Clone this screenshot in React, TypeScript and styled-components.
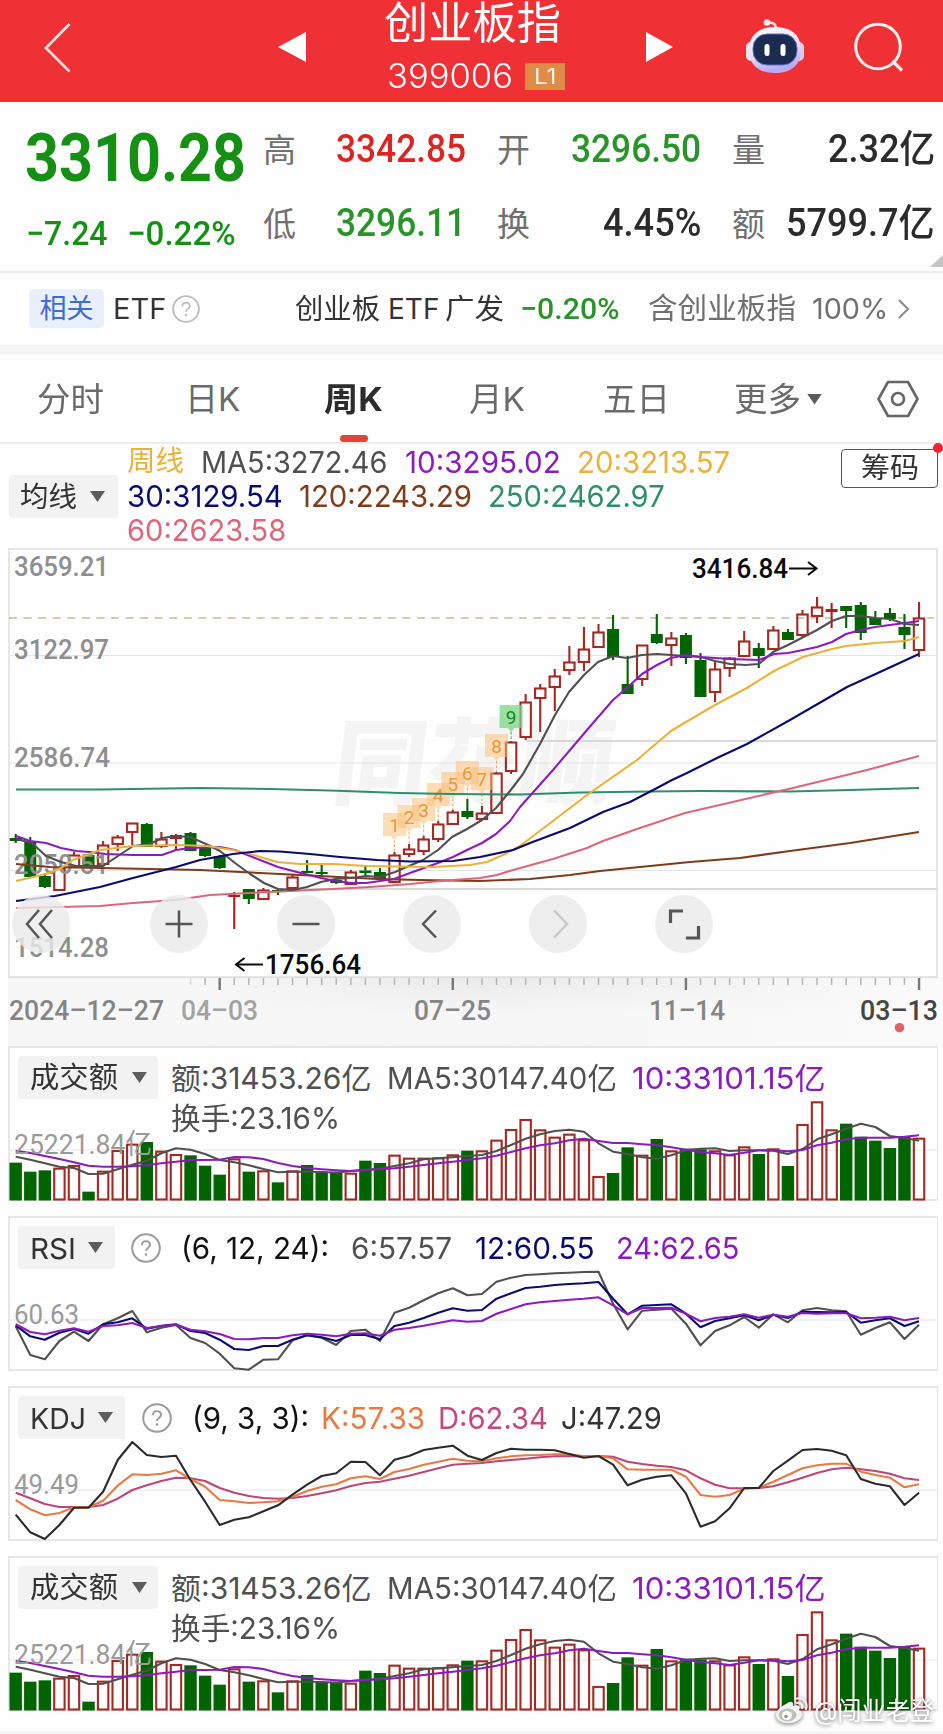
import React, { useLayoutEffect, useRef, useState } from "react";
import styled, { createGlobalStyle } from "styled-components";

const SANS = '"Inter", "Noto Sans CJK SC", sans-serif';
const DIN = '"Roboto", "Noto Sans CJK SC", sans-serif';

const C = {
  red: "#ef3135",
  up: "#a32a24",
  down: "#006400",
  green: "#159015",
  grey: "#505050",
  purple: "#8a1cbe",
  gold: "#e9b23c",
  navy: "#0b0b6e",
  brown: "#7d3c1c",
  teal: "#2f8f6b",
  pink: "#d8687c",
  line: "#e6e6e6",
};

const GlobalStyle = createGlobalStyle`
  * { box-sizing: border-box; }
  body { margin: 0; background: #fefefe; font-family: ${SANS}; }
`;

/* ---------- text that is condensed to a given advance width ---------- */

const FitBox = styled.span<{ $w: number; $ml: number; $dy: number }>`
  display: block;
  flex: none;
  width: ${(p) => p.$w}px;
  margin-left: ${(p) => p.$ml}px;
  margin-top: ${(p) => p.$dy}px;
`;

const FitText = styled.span<{ $size: number; $weight: number; $color: string; $din: boolean }>`
  display: inline-block;
  vertical-align: top;
  white-space: pre;
  transform-origin: 0 50%;
  line-height: 1;
  font-family: ${(p) => (p.$din ? DIN : SANS)};
  font-size: ${(p) => p.$size}px;
  font-weight: ${(p) => p.$weight};
  color: ${(p) => p.$color};
`;

type FitProps = {
  w: number;
  size: number;
  ml?: number;
  dy?: number;
  weight?: number;
  color?: string;
  din?: boolean;
  children: string;
};

function Fit({ w, size, ml = 0, dy = 0, weight = 400, color = C.grey, din = false, children }: FitProps) {
  const ref = useRef<HTMLSpanElement>(null);
  const [scale, setScale] = useState(1);
  useLayoutEffect(() => {
    if (ref.current) setScale(w / ref.current.offsetWidth);
  }, [w, children]);
  return (
    <FitBox $w={w} $ml={ml} $dy={dy}>
      <FitText ref={ref} $size={size} $weight={weight} $color={color} $din={din} style={{ transform: `scaleX(${scale})` }}>
        {children}
      </FitText>
    </FitBox>
  );
}

/* ---------- page parts ---------- */

const Page = styled.main`
  position: relative;
  width: 943px;
  height: 1734px;
  overflow: hidden;
  display: flex;
  flex-direction: column;
`;

const Header = styled.header`
  height: 102px;
  flex: none;
  background: ${C.red};
  display: flex;
  align-items: center;
  svg { flex: none; display: block; }
`;

const TitleBlock = styled.div`
  width: 339px;
  height: 102px;
  padding: 1px 0 0 78px;
  display: flex;
  flex-direction: column;
`;

const CodeRow = styled.div`
  display: flex;
  align-items: center;
  height: 28px;
  margin-top: 17px;
`;

const LevelBadge = styled.span`
  width: 40px;
  height: 27px;
  margin-left: 12px;
  background: #e08c48;
  display: flex;
  align-items: center;
  justify-content: center;
`;

const Quote = styled.section`
  position: relative;
  height: 171px;
  flex: none;
  display: flex;
  border-bottom: 2px solid #ececec;
`;

const PriceBlock = styled.div`
  width: 263px;
  padding: 23px 0 0 25px;
`;

const ChangeRow = styled.div`
  display: flex;
  margin-top: 24px;
`;

const StatGrid = styled.div`
  flex: 1;
  display: grid;
  grid-template-columns: 34px 169px 67px 168px 64px 178px;
  grid-template-rows: 74px 74px;
  padding-top: 10px;
`;

const StatLabel = styled.div<{ $pad?: number }>`
  display: flex;
  align-items: center;
  padding: 2px 0 0 ${(p) => p.$pad ?? 0}px;
`;

const StatValue = styled.div<{ $right?: number }>`
  display: flex;
  align-items: center;
  justify-content: flex-end;
  padding-right: ${(p) => p.$right ?? 0}px;
`;

const Corner = styled.i`
  position: absolute;
  right: 0;
  bottom: 4px;
  width: 13px;
  height: 12px;
  background: #c6c6c6;
  clip-path: polygon(100% 0, 100% 100%, 0 100%);
`;

const EtfRow = styled.section`
  height: 81px;
  flex: none;
  padding: 0 0 1px 29px;
  border-bottom: 9px solid #f5f5f6;
  display: flex;
  align-items: center;
  svg { flex: none; }
`;

const Chip = styled.span`
  width: 75px;
  height: 39px;
  border-radius: 5px;
  background: #e9effd;
  display: flex;
  align-items: center;
  justify-content: center;
`;

const Tabs = styled.nav`
  height: 90px;
  flex: none;
  display: flex;
  align-items: center;
  padding: 2px 0 0 37px;
  border-bottom: 2px solid #ececec;
`;

const ActiveTab = styled.div`
  height: 100%;
  margin-left: 84px;
  display: flex;
  flex-direction: column;
  align-items: center;
  padding-top: 27px;
  &::after {
    content: "";
    width: 28px;
    height: 8px;
    margin-top: 19px;
    border-radius: 4px;
    background: #e0443e;
  }
`;

const Caret = styled.i<{ $ml: number; $w?: number }>`
  flex: none;
  width: ${(p) => p.$w ?? 15}px;
  height: 11px;
  margin-left: ${(p) => p.$ml}px;
  background: #5c5c5c;
  clip-path: polygon(0 0, 100% 0, 50% 100%);
`;

const Legend = styled.section`
  height: 104px;
  flex: none;
  display: flex;
  padding-left: 9px;
`;

const Picker = styled.div<{ $w: number; $mt?: number }>`
  width: ${(p) => p.$w}px;
  height: 43px;
  flex: none;
  margin-top: ${(p) => p.$mt ?? 0}px;
  padding-left: 12px;
  border-radius: 4px;
  background: #f2f2f2;
  display: flex;
  align-items: center;
`;

const LegendLines = styled.div`
  width: 724px;
  padding-top: 1px;
  flex: none;
`;

const LegendLine = styled.div`
  height: 34px;
  display: flex;
  align-items: center;
  padding-left: 9px;
`;

const ChipsButton = styled.div`
  position: relative;
  width: 97px;
  height: 39px;
  margin: 5px 0 0 -1px;
  border: 1.5px solid #555;
  border-radius: 4px;
  display: flex;
  align-items: center;
  justify-content: center;
  &::after {
    content: "";
    position: absolute;
    right: -6px;
    top: -7px;
    width: 10px;
    height: 10px;
    border-radius: 50%;
    background: #ee2433;
  }
`;

const MainChart = styled.section`
  flex: none;
  width: 930px;
  height: 429px;
  margin-left: 8px;
  display: grid;
  > * { grid-area: 1 / 1; }
  svg { display: block; overflow: visible; }
`;

const Controls = styled.div`
  align-self: end;
  height: 82px;
  padding-left: 4px;
  display: flex;
  gap: 68.3px;
  button:first-child { margin-right: 12px; }
`;

const RoundButton = styled.button<{ $dim?: boolean }>`
  width: 58px;
  height: 58px;
  padding: 0;
  border: 0;
  border-radius: 50%;
  background: rgba(234, 234, 234, 0.82);
  color: ${(p) => (p.$dim ? "#c9c9c9" : "#555")};
`;

const Timeline = styled.section`
  flex: none;
  width: 935px;
  height: 69px;
  margin-left: 8px;
  background: linear-gradient(90deg, #f7f7f7 0 20%, transparent 50%, #fafafa 100%),
    linear-gradient(#e9e9e9, #f6f6f6 55%);
  svg { display: block; }
`;

const Panel = styled.section`
  flex: none;
  width: 930px;
  height: 155px;
  margin: 0 0 15px 8px;
  border: 2px solid ${C.line};
  border-right-width: 1px;
  display: grid;
  > * { grid-area: 1 / 1; }
  > svg { display: block; margin: -2px; }
`;

const PanelHead = styled.div`
  display: flex;
  align-items: flex-start;
  padding: 8px 0 0 8px;
`;

const HeadLines = styled.div`
  display: flex;
  flex-direction: column;
`;

const HeadLine = styled.div<{ $h: number }>`
  display: flex;
  align-items: center;
  height: ${(p) => p.$h}px;
`;

const BottomStrip = styled.div`
  height: 4px;
  margin-top: 5px;
  background: #f4f4f4;
`;

const Watermark = styled.div`
  position: absolute;
  left: 773px;
  top: 1695px;
  display: flex;
  align-items: center;
  filter: drop-shadow(0 1px 2px rgba(0, 0, 0, 0.55));
`;

/* ---------- data ---------- */

const X0 = 15.7;
const STEP = 14.57;
const xAt = (i: number) => X0 + STEP * i;

type Candle = [kind: "r" | "g" | "f", high: number, top: number, bottom: number, low: number];

const candles: Candle[] = [
  ["g", 834, 838, 841, 843], ["g", 837, 841, 877, 877], ["g", 873, 876, 887, 888], ["r", 868, 868, 890, 890],
  ["r", 852, 855, 867, 868], ["g", 855, 855, 867, 867], ["r", 841, 845, 864, 864], ["r", 835, 837, 844, 851],
  ["r", 823, 823, 832, 845], ["g", 823, 824, 847, 847], ["r", 832, 839, 846, 848], ["f", 834, 835, 839, 849],
  ["g", 832, 833, 851, 851], ["g", 847, 848, 856, 857], ["g", 855, 856, 868, 869], ["f", 892, 895, 897, 929],
  ["g", 889, 889, 899, 904], ["r", 888, 890, 899, 900], ["g", 889, 890, 891.5, 895], ["r", 874, 877, 888, 888],
  ["g", 860, 871, 873, 873], ["g", 865, 872, 874, 876], ["g", 879, 880, 883, 884], ["r", 870, 872, 884, 884],
  ["g", 866, 870.5, 873, 876], ["g", 868, 872, 879, 879], ["r", 852, 855, 882, 882], ["r", 844, 849, 854, 857],
  ["r", 836, 839, 851, 855], ["r", 821, 824, 839, 842], ["r", 810, 812, 824, 825], ["g", 799, 811, 817, 819],
  ["r", 806, 813, 819, 820], ["r", 772, 773, 813, 813], ["r", 741, 742, 771, 774], ["r", 694, 702, 737, 740],
  ["r", 684, 688, 698, 732], ["r", 669, 676, 687, 711], ["r", 646, 662, 670, 675], ["r", 627, 649, 662, 671],
  ["r", 624, 632, 647, 647], ["g", 615, 629, 657, 660], ["g", 656, 684, 694, 694], ["r", 645, 645, 679, 686],
  ["g", 614, 634, 643, 644], ["r", 632, 638, 645, 666], ["g", 633, 635, 658, 664], ["g", 653, 660, 697, 697],
  ["r", 661, 669, 692, 702], ["r", 657, 658, 668, 677], ["r", 631, 641, 656, 656], ["g", 643, 648, 656, 668],
  ["r", 626, 630, 649, 649], ["g", 629, 632, 640, 640], ["r", 610, 614, 635, 637], ["r", 597, 607, 616, 623],
  ["f", 603, 609, 612, 628], ["g", 606, 606, 611, 628], ["g", 602, 605, 633, 640], ["g", 611, 618, 625, 625],
  ["g", 608, 613, 619, 621], ["g", 614, 627, 635, 649], ["r", 602, 618, 650, 657],
];

const maLines: { color: string; pts: string }[] = [
  { color: C.teal, pts: "16,789.5 100,789.5 200,788 270,789 330,790.5 400,793 450,794 520,794.5 580,792.5 650,791.5 700,791 790,791.5 850,790 919,788" },
  { color: C.brown, pts: "16,864 50,867 100,868 150,869 200,870 260,873 320,876 377,879 420,880 480,881 530,879 570,875 600,871 640,867 690,862 740,858 790,851 850,843 919,832" },
  { color: C.pink, pts: "16,908 60,907 100,906 133,903 176,900 210,895 250,893 290,891 333,889 370,887 410,884 440,881 480,878 497,875 513,870 553,859 587,848 603,841 637,829 685,813 737,801 793,788 830,779 867,770 919,756" },
  { color: C.grey, pts: "16,839 32,843 46,856 61,862 76,866 103,866 118,856 133,846 150,844 162,838 176,836 190,837 206,844 220,851 235,863 250,874 264,883 278,889 293,890 307,887 321,882 335,879 351,878 366,876 380,877 395,872 409,866 423,860 438,850 452,837 467,829 482,820 496,808 510,791 523,774 540,744 555,715 569,692 584,675 598,662 613,656 627,658 642,655 657,654 686,656 701,657 715,661 730,664 745,665 759,664 773,652 788,645 817,630 832,621 846,616 861,616 876,618 890,619 905,624 919,625" },
  { color: C.purple, pts: "16,836 30,841 46,843 61,848 76,851 90,852 105,854 133,855 162,855 176,850 190,848 220,847 235,850 250,856 278,867 293,871 321,878 336,881 351,883 366,883 380,881 394,879 410,873 438,863 453,857 467,850 482,843 496,834 510,821 520,807 553,770 587,730 613,700 628,687 642,674 657,665 671,658 686,655 701,657 715,658 730,659 759,660 774,654 788,653 803,650 817,647 832,642 846,634 861,630 875,627 890,625 905,623 919,621" },
  { color: C.gold, pts: "16,881 46,874 61,868 73,860 100,850 133,846 177,845 207,846 233,850 250,854 277,862 300,864 333,864 367,866 433,867 470,865 487,862 503,855 520,846 553,821 587,795 637,760 671,731 686,722 715,705 747,688 774,671 803,657 832,649 846,646 875,643 905,641 919,637" },
  { color: C.navy, pts: "16,901 55,896 100,887 133,878 176,867 200,860 233,854 260,851 280,851.5 310,854 340,857 377,860 410,861.5 453,861 480,857 513,850 530,843 570,828 603,812 630,802 657,788 672,780 687,773 717,758 747,744 790,720 847,687 880,672 919,654" },
];

const signals: [number, number, number][] = [
  [1, 26, 825], [2, 27, 817], [3, 28, 810], [4, 29, 795], [5, 30, 784], [6, 31, 773], [7, 32, 779], [8, 33, 746], [9, 34, 717],
];

const volume =
  "g368 g395 g391 r383 r375 g455 r392 r330 r311 g306 r332 r342 g346 g377 g404 r355 g395 r391 g427 r391 g375 g395 g395 r398 g362 g369 r344 r353 r353 r352 r343 g332 r331 r299 r267 r237 r268 r290 r281 r298 r408 g399 g322 r344 g297 r331 g326 g328 r331 r343 r319 g342 r325 g378 r252 r184 r268 g251 g290 g302 g324 g290 r293".split(" ");

const nums = (s: string) => s.split(" ").map(Number);

const volMa5 = nums("350 359 370 380 384 402 401 388 374 362 340 325 329 342 360 367 376 387 397 395 395 396 398 393 389 386 378 370 358 355 352 348 345 333 315 296 283 273 269 275 310 335 342 352 356 346 330 326 325 333 331 331 332 342 327 298 283 266 251 261 288 294 302");
const volMa10 = nums("332 339 348 357 367 377 380 380 379 376 370 365 360 360 359 351 352 357 369 378 384 388 391 393 390 388 385 380 375 370 365 360 355 347 336 325 316 310 301 296 303 309 309 313 316 322 329 336 340 345 338 331 331 334 330 316 308 298 293 293 293 290 286");

const rsi6 = nums("858 944 957 902 874 902 852 834 812 876 862 854 893 908 940 984 988 958 957 900 885 892 914 872 868 902 817 802 780 759 744 765 761 724 712 704 702 699 697 695 694 790 867 811 808 805 850 915 872 855 830 862 822 846 810 803 810 813 883 863 846 896 853");
const rsi12 = nums("855 888 898 877 866 880 852 846 834 865 856 852 872 878 898 926 929 917 917 898 885 891 902 884 884 897 857 847 833 817 804 811 809 775 759 743 739 734 731 729 725 775 822 796 794 792 820 861 842 834 825 840 823 833 814 815 816 815 847 840 834 857 843");
const rsi24 = nums("852 875 882 871 864 874 857 855 848 863 857 853 868 873 881 896 897 893 893 885 880 883 888 880 879 886 868 863 856 848 840 844 842 820 806 792 786 782 778 775 771 795 822 803 803 802 820 843 833 829 822 832 823 829 818 820 819 819 834 832 829 840 833");

const kdjJ = nums("404 457 477 435 383 383 335 240 186 225 231 227 300 365 435 419 412 394 376 344 314 288 280 245 246 286 239 228 210 203 197 227 240 219 206 209 209 211 222 233 228 254 316 299 290 286 340 440 424 385 324 324 273 242 210 207 212 226 297 311 319 375 338");
const kdjK = nums("360 388 406 399 382 382 362 317 283 285 281 271 297 320 360 364 369 367 364 350 333 320 313 295 289 297 276 267 254 245 236 242 244 235 229 226 225 223 223 229 228 235 268 269 269 269 290 345 350 345 326 323 305 285 265 256 251 251 275 285 293 322 313");
const kdjD = nums("338 355 372 381 381 381 375 356 330 316 303 293 295 303 324 338 348 354 356 354 348 340 331 318 309 305 296 287 276 265 254 251 249 244 240 236 232 229 228 229 228 230 245 252 257 261 271 295 314 325 325 324 319 307 293 279 268 263 268 273 281 295 300");

/* values are stored in thirds of a pixel, `base` is the panel's own zero */
const toPoints = (v: number[], base: number) => v.map((y, i) => `${xAt(i).toFixed(1)},${((y - base) / 3).toFixed(1)}`).join(" ");

function Line({ data, base, color }: { data: number[]; base: number; color: string }) {
  return <polyline points={toPoints(data, base)} fill="none" stroke={color} strokeWidth={2.1} strokeLinejoin="round" />;
}

function AxisText({ x, y, w, size = 28, color = "#8f8f8f", weight = 500, children }: {
  x: number; y: number; w: number; size?: number; color?: string; weight?: number; children: string;
}) {
  return (
    <text x={x} y={y} textLength={w} lengthAdjust="spacingAndGlyphs" fontFamily={DIN} fontSize={size} fontWeight={weight} fill={color}>
      {children}
    </text>
  );
}

/* ---------- charts ---------- */

function PriceChart() {
  return (
    <svg width="930" height="429" viewBox="8 548 930 429">
      <rect x="9" y="549" width="928" height="428" fill="none" stroke={C.line} strokeWidth="2" />
      <g transform="translate(330 797) skewX(-7)">
        <text textLength="280" fontFamily="Noto Sans CJK SC" fontWeight="900" fontSize="94" fill="#f4f4f4">同花顺</text>
      </g>
      {[655.5, 763, 870.5].map((y) => (
        <line key={y} x1="9" x2="937" y1={y} y2={y} stroke="#e4e4e4" strokeWidth="1" />
      ))}
      <line x1="526" x2="937" y1="741" y2="741" stroke="#d9d9d9" strokeWidth="2" />
      <line x1="278" x2="937" y1="889" y2="889" stroke="#d9d9d9" strokeWidth="2" />
      <line x1="9" x2="934" y1="618" y2="618" stroke="#c4bd98" strokeWidth="1.4" strokeDasharray="8 6.57" />
      {candles.map(([kind, high, top, bottom, low], i) => {
        const x = xAt(i);
        const color = kind === "g" ? C.down : kind === "f" ? "#b01c1c" : C.up;
        return (
          <g key={i} stroke={color} strokeWidth="2.1">
            {high < top && <line x1={x} x2={x} y1={high} y2={top} />}
            {low > bottom && <line x1={x} x2={x} y1={bottom} y2={low} />}
            {kind === "r" ? (
              <rect x={x - 5.2} y={top + 0.5} width="10.4" height={bottom - top - 0.5} fill="none" />
            ) : (
              <rect x={x - 6} y={top} width="12" height={bottom - top} fill={color} stroke="none" />
            )}
          </g>
        );
      })}
      <AxisText x={14} y={576} w={95}>3659.21</AxisText>
      <AxisText x={14} y={659} w={95}>3122.97</AxisText>
      <AxisText x={14} y={767} w={96}>2586.74</AxisText>
      <AxisText x={14} y={874} w={95}>2050.51</AxisText>
      <AxisText x={14} y={957} w={95}>1514.28</AxisText>
      {signals.map(([n, i, y]) => {
        const x = xAt(i);
        const last = n === 9;
        const tint = last ? "#7dd487" : "#f9bd76";
        return (
          <g key={n}>
            <path d={`M${x - 11.5} ${y - 12}h23v23h-8l-3.5 4l-3.5 -4h-8z`} fill={tint} fillOpacity={last ? 0.75 : 0.52} />
            <line x1={x} x2={x} y1={y + 15} y2={candles[i][1]} stroke={last ? "#4e9a55" : "#e4ad55"} strokeDasharray="2.5 2" />
            <text x={x} y={y + 7} textAnchor="middle" fontFamily={DIN} fontSize="19" fill={last ? "#138a22" : "#e79a34"}>{n}</text>
          </g>
        );
      })}
      {maLines.map((l) => (
        <polyline key={l.color} points={l.pts} fill="none" stroke={l.color} strokeWidth="2.1" strokeLinejoin="round" />
      ))}
      <AxisText x={692} y={578} w={96} color="#0a0a0a">3416.84</AxisText>
      <path d="M789 568.5h27M808 562l8.500 6.500l-8.500 6.500" fill="none" stroke="#0a0a0a" strokeWidth="2" />
      <AxisText x={265} y={974} w={96} color="#0a0a0a">1756.64</AxisText>
      <path d="M263 964.500h-26.500M244.500 958l-8.500 6.500l8.500 6.500" fill="none" stroke="#0a0a0a" strokeWidth="2" />
    </svg>
  );
}

function TimeAxis() {
  return (
    <svg width="935" height="69" viewBox="8 977 935 69">
      <line x1="8" x2="938" y1="977.5" y2="977.5" stroke="#dedede" />
      {Array.from({ length: 51 }, (_, k) => k + 12).map((i) => {
        const major = (i - 14) % 16 === 0;
        return (
          <line key={i} x1={xAt(i)} x2={xAt(i)} y1="978" y2={major ? 990 : 985} stroke={major ? "#777" : "#b5b5b5"} strokeWidth={major ? 2.4 : 1.5} opacity={i < 13 ? 0.5 : 1} />
        );
      })}
      <AxisText x={9} y={1020} w={155} color="#858585">2024–12–27</AxisText>
      <AxisText x={181} y={1020} w={77} color="#a3a3a3">04–03</AxisText>
      <AxisText x={414} y={1020} w={77} color="#858585">07–25</AxisText>
      <AxisText x={649} y={1020} w={76} color="#858585">11–14</AxisText>
      <AxisText x={860} y={1020} w={78} color="#444">03–13</AxisText>
      <circle cx="899.5" cy="1027.7" r="4.8" fill="#da6663" />
    </svg>
  );
}

function VolumePanel() {
  return (
    <Panel>
      <PanelHead>
        <Picker $w={140}>
          <Fit w={88} size={29} color="#333" dy={-1}>成交额</Fit>
          <Caret $ml={14} />
        </Picker>
        <HeadLines>
          <HeadLine $h={43}>
            <Fit w={200} size={30} ml={13} dy={1}>额:31453.26亿</Fit>
            <Fit w={230} size={30} ml={16} dy={1}>MA5:30147.40亿</Fit>
            <Fit w={194} size={30} ml={15} dy={1} color={C.purple}>10:33101.15亿</Fit>
          </HeadLine>
          <HeadLine $h={36}>
            <Fit w={169} size={30} ml={13} dy={1}>换手:23.16%</Fit>
          </HeadLine>
        </HeadLines>
      </PanelHead>
      <svg width="930" height="155" viewBox="8 0 930 155">
        <line x1="9" x2="937" y1="104" y2="104" stroke={C.line} />
        {volume.map((v, i) => {
          const top = (Number(v.slice(1)) - 18) / 3;
          const x = xAt(i);
          return v[0] === "g" ? (
            <rect key={i} x={x - 6.2} y={top} width="12.4" height={154.5 - top} fill={C.down} />
          ) : (
            <rect key={i} x={x - 5.2} y={top + 1} width="10.4" height={152.5 - top} fill="none" stroke={C.up} strokeWidth="2.1" />
          );
        })}
        <Line data={volMa5} base={18} color={C.grey} />
        <Line data={volMa10} base={18} color={C.purple} />
        <AxisText x={14} y={108} w={138} color="#9a9a9a" weight={400}>25221.84亿</AxisText>
      </svg>
    </Panel>
  );
}

const HelpIcon = styled.svg<{ $ml: number }>`
  flex: none;
  margin-left: ${(p) => p.$ml}px;
`;

function Help({ size, ml, color }: { size: number; ml: number; color: string }) {
  return (
    <HelpIcon width={size} height={size} viewBox="0 0 30 30" $ml={ml}>
      <circle cx="15" cy="15" r="13.800" fill="none" stroke={color} strokeWidth="2" />
      <path d="M11 12.200c0-5.400 8-5.400 8-.4c0 3-4 3.200-4 6.200" fill="none" stroke={color} strokeWidth="1.900" />
      <circle cx="15" cy="21.500" r="1.300" fill={color} />
    </HelpIcon>
  );
}

const RobotSvg = styled.svg`
  margin-bottom: 10px;
`;

function RobotIcon() {
  return (
    <RobotSvg width="60" height="58" viewBox="0 0 60 58">
      <defs>
        <linearGradient id="shell" x1="0" y1="0" x2="0.3" y2="1">
          <stop offset="0" stopColor="#fff" />
          <stop offset="0.6" stopColor="#e9dcf4" />
          <stop offset="1" stopColor="#b9a9f2" />
        </linearGradient>
      </defs>
      <path d="M31 12c0-5-3-7-8-6" fill="none" stroke="#f9dfe6" strokeWidth="2.500" />
      <circle cx="22" cy="5.500" r="3.300" fill="#fbe9ee" />
      <rect x="1" y="25" width="10" height="19" rx="5" fill="#efe6fa" />
      <rect x="49" y="25" width="10" height="19" rx="5" fill="#d9cdf6" />
      <path d="M30 10C47 10 56 19 56 33C56 49 45 56 30 56S4 49 4 33C4 19 13 10 30 10Z" fill="url(#shell)" />
      <rect x="8" y="17" width="44" height="31" rx="14" fill="#1c2b50" stroke="#5774c8" strokeWidth="1" />
      <rect x="19.500" y="27" width="5" height="12" rx="2.500" fill="#fff" />
      <rect x="35.500" y="27" width="5" height="12" rx="2.500" fill="#fff" />
    </RobotSvg>
  );
}

const EtfChevron = styled.svg`
  margin-left: 10px;
`;

const Hexagon = styled.svg`
  margin-left: 54px;
`;

export default function App() {
  return (
    <>
      <GlobalStyle />
      <Page>
        <Header>
          <svg width="307" height="102" viewBox="0 0 307 102">
            <path d="M69.500 24L46 48L69.500 71.500" fill="none" stroke="#ffe4e2" strokeWidth="2.600" />
            <path d="M278 47L306 32V62Z" fill="#fff" />
          </svg>
          <TitleBlock>
            <Fit w={177} size={44} color="#fff" ml={-1}>创业板指</Fit>
            <CodeRow>
              <Fit w={126} size={34} color="#fff" ml={2} weight={300}>399006</Fit>
              <LevelBadge>
                <Fit w={22} size={22} color="#fff3e2">L1</Fit>
              </LevelBadge>
            </CodeRow>
          </TitleBlock>
          <svg width="99" height="102" viewBox="0 0 99 102">
            <path d="M0 32L27 47L0 62Z" fill="#fff" />
          </svg>
          <RobotIcon />
          <svg width="138" height="102" viewBox="805 0 138 102">
            <circle cx="878" cy="46.500" r="22.300" fill="none" stroke="#fff1ee" strokeWidth="3" />
            <path d="M892.500 61L902 70.500" stroke="#fff1ee" strokeWidth="3.200" />
          </svg>
        </Header>

        <Quote>
          <PriceBlock>
            <Fit w={221} size={67} weight={700} color={C.green} din>3310.28</Fit>
            <ChangeRow>
              <Fit w={82} size={34} ml={1} weight={500} color={C.green} din>−7.24</Fit>
              <Fit w={109} size={34} ml={19} weight={500} color={C.green} din>−0.22%</Fit>
            </ChangeRow>
          </PriceBlock>
          <StatGrid>
            <StatLabel><Fit w={33} size={33} color="#707070">高</Fit></StatLabel>
            <StatValue><Fit w={130} size={38} weight={500} color="#d82622" din>3342.85</Fit></StatValue>
            <StatLabel $pad={31}><Fit w={33} size={33} color="#707070">开</Fit></StatLabel>
            <StatValue><Fit w={130} size={38} weight={500} color="#2a932a" din>3296.50</Fit></StatValue>
            <StatLabel $pad={31}><Fit w={33} size={33} color="#707070">量</Fit></StatLabel>
            <StatValue $right={8}><Fit w={107} size={38} weight={500} color="#2b2b2b" din>2.32亿</Fit></StatValue>
            <StatLabel><Fit w={33} size={33} color="#707070">低</Fit></StatLabel>
            <StatValue><Fit w={130} size={38} weight={500} color="#2a932a" din>3296.11</Fit></StatValue>
            <StatLabel $pad={31}><Fit w={33} size={33} color="#707070">换</Fit></StatLabel>
            <StatValue><Fit w={98} size={38} weight={500} color="#2b2b2b" din>4.45%</Fit></StatValue>
            <StatLabel $pad={31}><Fit w={33} size={33} color="#707070">额</Fit></StatLabel>
            <StatValue $right={8}><Fit w={149} size={38} weight={500} color="#2b2b2b" din>5799.7亿</Fit></StatValue>
          </StatGrid>
          <Corner />
        </Quote>

        <EtfRow>
          <Chip><Fit w={54} size={27} color="#3f6bd4" dy={-1}>相关</Fit></Chip>
          <Fit w={53} size={28} ml={9} dy={1} color="#333">ETF</Fit>
          <Help size={28} ml={6} color="#bdbdbd" />
          <Fit w={85} size={28} ml={95} color="#333" dy={0}>创业板</Fit>
          <Fit w={51} size={28} ml={8} dy={1} color="#333">ETF</Fit>
          <Fit w={59} size={28} ml={6} color="#333" dy={0}>广发</Fit>
          <Fit w={99} size={30} ml={16} dy={1} color="#2a932a" weight={500} din>−0.20%</Fit>
          <Fit w={148} size={29} ml={29} color="#707070" dy={0}>含创业板指</Fit>
          <Fit w={76} size={28} ml={16} dy={1} color="#707070">100%</Fit>
          <EtfChevron width="12" height="20" viewBox="0 0 12 20">
            <path d="M1 1L10 10L1 19" fill="none" stroke="#8a8a8a" strokeWidth="2" />
          </EtfChevron>
        </EtfRow>

        <Tabs>
          <Fit w={67} size={33} color="#6a6a6a">分时</Fit>
          <Fit w={55} size={33} ml={81} color="#6a6a6a">日K</Fit>
          <ActiveTab><Fit w={59} size={33} weight={700} color="#2c2c2c">周K</Fit></ActiveTab>
          <Fit w={56} size={33} ml={86} color="#6a6a6a">月K</Fit>
          <Fit w={67} size={33} ml={78} color="#6a6a6a">五日</Fit>
          <Fit w={67} size={33} ml={64} color="#6a6a6a">更多</Fit>
          <Caret $ml={6} $w={15} />
          <Hexagon width="44" height="40" viewBox="0 0 44 40">
            <path d="M12 3H32L41.500 20L32 37H12L2.500 20Z" fill="none" stroke="#666" strokeWidth="2.600" strokeLinejoin="round" />
            <circle cx="22" cy="20" r="6" fill="none" stroke="#666" strokeWidth="2.600" />
          </Hexagon>
        </Tabs>

        <Legend>
          <Picker $w={109} $mt={31}>
            <Fit w={57} size={28} ml={-1} color="#333">均线</Fit>
            <Caret $ml={13} />
          </Picker>
          <LegendLines>
            <LegendLine>
              <Fit w={57} size={28} color={C.gold} dy={-2}>周线</Fit>
              <Fit w={186} size={30} ml={17}>MA5:3272.46</Fit>
              <Fit w={156} size={30} ml={18} color={C.purple}>10:3295.02</Fit>
              <Fit w={153} size={30} ml={16} color={C.gold}>20:3213.57</Fit>
            </LegendLine>
            <LegendLine>
              <Fit w={156} size={30} color={C.navy}>30:3129.54</Fit>
              <Fit w={173} size={30} ml={16} color={C.brown}>120:2243.29</Fit>
              <Fit w={177} size={30} ml={16} color={C.teal}>250:2462.97</Fit>
            </LegendLine>
            <LegendLine>
              <Fit w={159} size={30} color={C.pink}>60:2623.58</Fit>
            </LegendLine>
          </LegendLines>
          <ChipsButton><Fit w={58} size={28} color="#333" dy={-2}>筹码</Fit></ChipsButton>
        </Legend>

        <MainChart>
          <PriceChart />
          <Controls>
            {["M27 15L15 29L27 43M40 15L28 29L40 43", "M29 15.500V42.500M15.500 29H42.500", "M15.500 29H42.500", "M33 15.500L20 29L33 42.500", "M25 15.500L38 29L25 42.500", "M15.500 28V16H28M31 43H43.500V31"].map((d, i) => (
              <RoundButton key={d} $dim={i === 4}>
                <svg width="58" height="58" viewBox="0 0 58 58">
                  <path d={d} fill="none" stroke="currentColor" strokeWidth={i === 5 ? 3.2 : 2.5} />
                </svg>
              </RoundButton>
            ))}
          </Controls>
        </MainChart>

        <Timeline><TimeAxis /></Timeline>

        <VolumePanel />

        <Panel>
          <PanelHead>
            <Picker $w={97}>
              <Fit w={46} size={29} color="#333" dy={1}>RSI</Fit>
              <Caret $ml={12} />
            </Picker>
            <HeadLine $h={43}>
              <Help size={30} ml={16} color="#9a9a9a" />
              <Fit w={148} size={30} ml={20} dy={1} color="#111">(6, 12, 24):</Fit>
              <Fit w={101} size={30} ml={22} dy={1}>6:57.57</Fit>
              <Fit w={120} size={30} ml={23} dy={1} color={C.navy}>12:60.55</Fit>
              <Fit w={123} size={30} ml={21} dy={1} color={C.purple}>24:62.65</Fit>
            </HeadLine>
          </PanelHead>
          <svg width="930" height="155" viewBox="8 0 930 155">
            <line x1="9" x2="937" y1="104" y2="104" stroke={C.line} />
            <AxisText x={14} y={108} w={65} color="#9a9a9a" weight={400}>60.63</AxisText>
            <Line data={rsi6} base={527} color={C.grey} />
            <Line data={rsi12} base={527} color={C.navy} />
            <Line data={rsi24} base={527} color={C.purple} />
          </svg>
        </Panel>

        <Panel>
          <PanelHead>
            <Picker $w={107}>
              <Fit w={56} size={29} color="#333" dy={1}>KDJ</Fit>
              <Caret $ml={12} />
            </Picker>
            <HeadLine $h={43}>
              <Help size={30} ml={17} color="#9a9a9a" />
              <Fit w={117} size={30} ml={20} dy={1} color="#111">(9, 3, 3):</Fit>
              <Fit w={104} size={30} ml={12} dy={1} color="#e57a45">K:57.33</Fit>
              <Fit w={110} size={30} ml={13} dy={1} color="#c04a80">D:62.34</Fit>
              <Fit w={101} size={30} ml={13} dy={1} color="#333">J:47.29</Fit>
            </HeadLine>
          </PanelHead>
          <svg width="930" height="155" viewBox="8 0 930 155">
            <line x1="9" x2="937" y1="104" y2="104" stroke={C.line} />
            <AxisText x={14} y={108} w={65} color="#9a9a9a" weight={400}>49.49</AxisText>
            <Line data={kdjD} base={18} color="#bb4678" />
            <Line data={kdjK} base={18} color="#e57a45" />
            <Line data={kdjJ} base={18} color="#2a2a2a" />
          </svg>
        </Panel>

        <VolumePanel />
        <BottomStrip />

        <Watermark>
          <svg width="36" height="32" viewBox="0 0 36 32">
            <path d="M13 9C18 5 21 7 20 11C25 9 28 12 26 15C30 17 30 21 27 24C20 31 3 29 3 20C3 16 8 11 13 9Z" fill="#f4f4f4" />
            <ellipse cx="14.500" cy="20" rx="9" ry="6.500" fill="#b9c4b9" />
            <ellipse cx="14" cy="20.500" rx="5" ry="4.500" fill="#fff" />
            <circle cx="13" cy="21.500" r="1.800" fill="#8a938a" />
            <path d="M24 8C28 7 30 10 29 13M24 3.500C31 2 35 8 33 14" fill="none" stroke="#f4f4f4" strokeWidth="2.200" strokeLinecap="round" />
          </svg>
          <Fit w={120} size={25} ml={5} color="#fff">@闯业老登</Fit>
        </Watermark>
      </Page>
    </>
  );
}
